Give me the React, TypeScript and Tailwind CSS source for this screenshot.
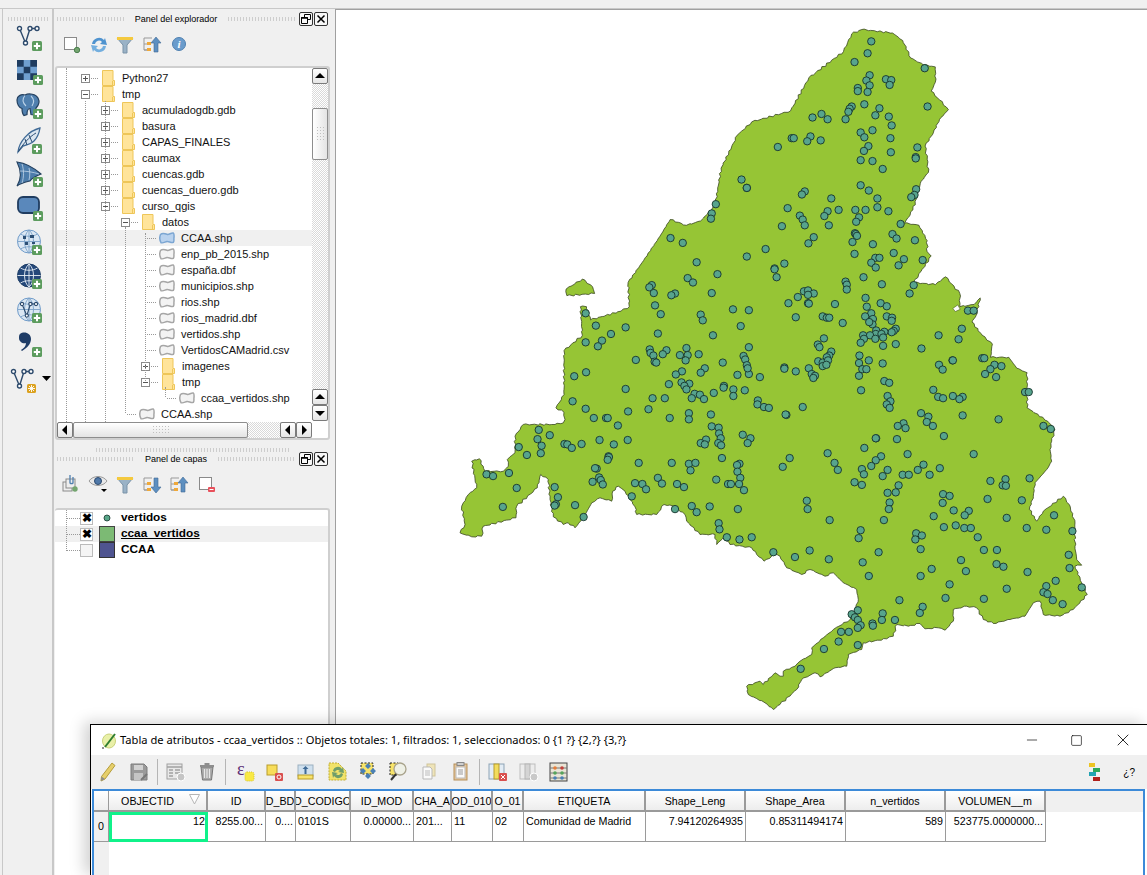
import React from 'react';
import { Minus, Square, X } from 'lucide-react';

const UI_FONT = "font-['Liberation_Sans','Noto_Sans',sans-serif]";

// contorno de la Comunidad de Madrid: mitad norte en coordenadas de trabajo, mitad sur en pixeles de pantalla
const OUTLINE_NORTH =
  '255,870 235,860 255,830 255,730 300,695 295,630 310,630 320,660 395,640 415,630 412,575 450,525 490,470 515,432 555,445 590,435 625,400 640,315 680,240 715,210 810,185 855,110 940,50 960,10 985,0 1060,8 1085,25 1105,65 1135,80 1165,85 1165,120 1155,140 1175,160 1197,182 1175,205 1160,235 1140,265 1145,295 1148,325 1130,345 1125,365 1110,410 1090,440 1125,445 1145,480 1145,505 1155,515 1130,550 1112,575 1165,580 1190,562 1225,600 1225,630 1260,625 1275,610 1265,650 1255,665 1280,695 1305,715 1300,745 1345,745 1365,770 1390,780 1390,860 1440,890';
const OUTLINE_SOUTH =
  '1055,430 1051.7,441.7 1050,450 1051.7,461.7 1046.7,470 1035,483.3 1033.3,496.7 1029.3,510 1036.7,521.7 1043.3,511.7 1063.3,496.7 1069.3,505 1075,523.3 1075,546.7 1076.7,560 1081.7,565.7 1075,566.7 1081.7,583.3 1087.3,595 1073.3,610 1060,616.7 1043.3,615 1040,601.7 1033.3,603.3 1025,616.7 1010,620 993.3,624 983.3,620 976.7,608.3 966.7,606.7 953.3,610 953.3,621.7 945,630.7 938.3,628.3 925,629.3 920,624 908.3,626.7 896.7,625 893.3,636.7 886.7,639.3 863.3,643.3 861.7,650 848.3,655 846.7,666.7 835,668.3 820,677.3 815,673.3 801.7,680 796.7,690 780,705 773.3,710 765,703.3 748.3,695 746.7,686.7 760,681.7 763.3,685 775,673.3 780,676.7 783.3,676.7 783.3,671.7 795,666.7 800,661.7 811.7,655 811.7,648.3 823.3,638.3 833.3,630 850,620 855,610 858.3,600 856.7,590 843.3,583.3 833.3,573.3 825,576.7 810,570 801.7,575 786.7,568.3 780,556.7 775,555 764,561.7 756.7,555 751.7,548.3 730,545 723.3,538.3 716.7,545 715,535 700,535 686.7,521.7 685,515 673.3,506.7 664,505 656.7,515 636.7,515 635,507.3 625,491.7 618.3,486.7 612.7,491.7 611.7,501.7 600,498.3 591.7,503.3 583.3,518.3 575,528.3 568.3,523.3 563.3,525 553.3,517.3 550,500 548.3,480 540.7,475 537.3,488.3 516.7,506.7 516,518.3 483.3,526.7 481.7,536.7 471.7,537.3 460,533.3 465,525 461.7,506.7 468.3,495 476.7,488.3 471.7,461.7 479.3,459.3 485,471.7 503.3,471.7 508.3,466.7 507.3,460 515,453.3 515,436.7 523.3,425 555,425 563.3,423.3 565,420';
const ISLAND = '260,590 300,567 325,585 330,600 262,605';
const HOLE = '1208,634 1220,626 1226,636 1214,641';

const POINTS =
  '1008,27 999,54 967,74 1139,88 1004,104 996,116 1044,113 1057,115 1004,127 1053,126 975,133 975,140 999,142 991,170 1146,175 960,175 955,180 952,187 1028,179 1018,195 1051,198 886,192 864,200 901,204 945,204 1058,218 1011,229 982,234 991,245 1055,247 813,247 818,247 859,243 851,254 884,252 779,267 1001,265 990,276 1056,279 1121,268 1117,290 1117,293 982,297 1011,299 1036,317 690,341 703,360 703,360 982,354 1002,366 1118,363 1114,376 1106,381 845,368 838,375 910,384 1023,384 627,397 1023,404 803,406 901,413 928,410 969,410 994,410 1050,413 617,418 615,430 833,423 840,432 893,424 978,427 971,437 845,445 789,447 904,445 1080,442 968,463 970,465 973,469 1060,465 1070,475 867,472 962,483 854,486 516,474 546,485 1115,479 1012,488 749,499 1063,508 967,510 703,516 1018,519 1028,519 1088,522 1134,524 1008,530 1075,536 1019,541 580,529 771,543 771,545 795,532 631,556 558,565 571,575 776,563 989,563 945,573 948,580 948,591 1034,579 1112,581 470,581 464,586 475,599 617,599 527,600 518,604 843,595 853,593 867,600 853,603 828,608 1102,600 994,610 805,622 853,622 855,623 919,624 478,627 997,630 1031,622 1046,629 669,636 708,638 1245,639 1259,639 308,645 492,647 590,648 595,661 823,654 889,652 899,655 905,655 1008,645 993,652 1046,652 1059,655 1012,658 1011,670 1003,665 1058,662 938,667 333,673 406,677 688,674 1068,680 1063,685 1230,680 1058,688 1020,684 1040,687 1019,692 1033,692 485,691 370,692 620,695 988,695 1005,695 990,703 982,712 1018,703 1037,700 1173,695 1222,704 892,702 348,707 308,711 338,720 877,716 881,722 708,722 1037,719 1068,715 1131,725 465,727 555,724 506,729 910,732 905,741 467,735 474,741 497,738 539,740 558,740 585,738 899,745 979,741 695,742 699,750 1002,752 1207,752 1208,752 1280,747 1285,747 431,751 477,755 481,757 553,752 644,757 878,754 889,757 902,752 889,765 898,762 703,763 978,758 1036,759 1174,762 1183,773 1310,762 1327,765 1300,772 795,768 795,771 823,777 855,770 986,772 996,772 309,779 600,770 590,780 544,777 529,784 680,785 708,783 705,770 862,783 870,787 866,792 280,788 978,787 735,790 1287,783 1314,790 543,802 562,805 512,806 550,810 555,818 647,810 646,814 1040,799 1052,803 406,817 670,818 698,820 983,820 1160,819 1385,824 1394,824 622,826 575,828 588,830 598,840 568,838 670,833 1048,833 1172,835 1184,838 1208,833 1232,835 1224,840 472,838 502,838 730,843 729,852 745,858 757,860 1055,845 1046,852 1053,860 840,858 308,862 276,845 462,863 412,868 1232,877 1130,872 1148,880 800,876 798,875 328,883 358,883 362,883 514,883 561,872 561,886 615,875 1320,886 1144,892 1087,895 1073,901 1092,906 1159,901 1430,901 1448,908 387,900 193,910 617,902 634,905 635,918 220,922 693,921 712,929 1186,924 1020,929 1019,929 639,929 190,931 411,933 342,933 603,932 1071,931 256,942 263,943 298,942 377,943 590,940 600,943 633,940 640,945 705,940 200,946 144,949 274,951 991,951 198,963 164,967 901,963 1097,965 1259,965 364,970 365,972 362,978 808,974 1032,970 1019,979 642,974 438,985 519,985 561,987 577,985 685,987 679,990 918,985 1136,989 1008,992 791,994 335,998 331,997 565,1002 985,999 680,1005 1176,997 926,1001 1122,1001 1048,1001 65,1011 81,1015 120,1008 990,1011 1085,1012 1100,1012 1036,1015 1151,1012 341,1018 687,1019 485,1019 628,1023 1300,1026 1337,1022 1396,1020 325,1028 345,1024 350,1034 429,1031 447,1033 495,1032 532,1033 549,1040 657,1033 664,1033 684,1033 967,1029 985,1035 1330,1036 1338,1037 1075,1036 139,1042 232,1040 456,1045 696,1047 1048,1053 1068,1052 1184,1056 1200,1060 240,1063 421,1061 850,1071 1183,1076 1293,1067 1377,1070 1053,1075 235,1079 232,1082 105,1085 282,1081 568,1083 612,1084 527,1090 681,1090 852,1090 1051,1090 1210,1093 1247,1094 580,1097 1237,1104 1456,1104 303,1108 1161,1106 1340,1110 906,1115 1039,1115 634,1122 636,1136 1215,1127 1186,1131 1236,1133 1252,1133 1389,1133 1437,1137 1501,1140 982,1138 1118,1145 1132,1150 1116,1159 977,1156 654,1154 685,1159 715,1154 1269,1154 1129,1181 857,1184 1026,1188 1284,1183 1316,1183 768,1188 821,1199 1492,1194 904,1204 987,1211 1228,1206 1315,1215 1332,1221 1494,1224 1240,1231 1156,1226 1391,1233 1002,1242 1129,1242 1200,1261 1460,1253 1437,1265 1524,1268 1340,1271 1430,1279 1440,1283 1190,1292 1284,1294 1453,1297 1477,1306 1077,1297 975,1320 1134,1312 1127,1326 960,1329 1036,1327 968,1336 1034,1342 1066,1342 975,1342 1011,1350 1012,1355 982,1354 953,1369 975,1360 934,1369 928,1391 975,1399 892,1408 835,1453';

// paso de coordenadas de trabajo a pixeles del lienzo (el lienzo empieza en 336,11)
const mx = (x: number) => 460 + x * 0.408 - 336;
const my = (y: number) => 30 + y * 0.44 - 11;
const parsePairs = (s: string) => s.split(' ').map((p) => p.split(',').map(Number));
const toCanvas = (s: string) => parsePairs(s).map(([x, y]) => [mx(x), my(y)]);
const screenToCanvas = (s: string) => parsePairs(s).map(([x, y]) => [x - 336, y - 11]);

// parte cada tramo y lo desplaza un poco, para que la costa salga irregular como en el shapefile
function roughen(points: number[][]) {
  const out: string[] = [];
  points.forEach(([x, y], i) => {
    const [nx, ny] = points[(i + 1) % points.length];
    const steps = Math.max(1, Math.round(Math.hypot(nx - x, ny - y) / 3));
    for (let s = 0; s < steps; s++) {
      const t = s / steps;
      const w = s === 0 ? 0 : 0.8;
      const dx = Math.sin(i * 12.9 + s * 78.2) * w;
      const dy = Math.cos(i * 37.7 + s * 41.3) * w;
      out.push(`${(x + (nx - x) * t + dx).toFixed(1)},${(y + (ny - y) * t + dy).toFixed(1)}`);
    }
  });
  return out.join(' ');
}

function MapCanvas() {
  const pts = parsePairs(POINTS);
  const region = roughen([...toCanvas(OUTLINE_NORTH), ...screenToCanvas(OUTLINE_SOUTH)]);
  return (
    <svg className="block h-full w-full" viewBox="0 0 811 864">
      <polygon points={region} fill="#96c535" stroke="#39461f" strokeWidth="0.8" />
      <polygon points={roughen(toCanvas(ISLAND))} fill="#96c535" stroke="#39461f" strokeWidth="0.8" />
      <polygon points={toCanvas(HOLE).join(' ')} fill="#fff" stroke="#39461f" strokeWidth="0.5" />
      {pts.map(([x, y], i) => (
        <circle key={i} cx={mx(x)} cy={my(y)} r="3.7" fill="#57a48d" stroke="#16332c" strokeWidth="0.9" />
      ))}
    </svg>
  );
}

function Plus({ x = 15, y = 15 }: { x?: number; y?: number }) {
  return (
    <g transform={`translate(${x} ${y})`}>
      <rect width="10" height="10" rx="1.500" fill="#5c9c5e" />
      <path d="M5 1.800v6.400M1.800 5h6.400" stroke="#fff" strokeWidth="2" />
    </g>
  );
}

function VeeShape() {
  return (
    <g fill="none" stroke="#2d4a6c" strokeWidth="1.400">
      <path d="M2.500 2.500 8.500 17 13 2.500h7" />
      <circle cx="2.500" cy="2.500" r="2" fill="#fff" />
      <circle cx="8.500" cy="17" r="2" fill="#fff" />
      <circle cx="13" cy="2.500" r="2" fill="#fff" />
      <circle cx="20" cy="2.500" r="2" fill="#fff" />
    </g>
  );
}

function Globe({ dark }: { dark?: boolean }) {
  const c = dark ? '#1f3e66' : '#6f9bc9';
  return (
    <g>
      <circle cx="12" cy="11.500" r="11.500" fill={dark ? '#24487a' : '#dbe7f3'} stroke={c} strokeWidth="1" />
      <path d="M0.500 11.500h23M12 0v23M3.500 4c5 3 12 3 17 0M3.500 19c5-3 12-3 17 0M12 0c-6 5-6 18 0 23M12 0c6 5 6 18 0 23" fill="none" stroke={dark ? '#e9eff6' : '#7ba1c8'} strokeWidth="0.900" />
    </g>
  );
}

function SideIcon({ name }: { name: string }) {
  return (
    <svg width="26" height="26" viewBox="0 0 26 26" className="overflow-visible">
      {name === 'vector' && (
        <>
          <VeeShape />
          <Plus />
        </>
      )}
      {name === 'raster' && (
        <>
          <rect width="20" height="20" fill="#6f9fd0" />
          <path d="M0 0h6.700v6.700H0zM13.300 0H20v6.700h-6.700zM6.700 6.700h6.600v6.600H6.700zM0 13.300h6.700V20H0zM13.300 13.300H20V20h-6.700z" fill="#1f3c60" />
          <Plus x={16} y={15} />
        </>
      )}
      {name === 'postgres' && (
        <>
          <path d="M0 6C0 2 4 0 8 1c4-2 11-1 13 3 2 4 0 8-2 10l-1 7-4-.5-1-6c-2 0-3 1-3 6l-3 1c-2-2-2-5-2-7C2 14 0 10 0 6z" fill="#4f7fae" stroke="#24405f" strokeWidth="1.200" />
          <path d="M8 1.500C5 5 6 9 9 12M14 2c3 3 3 7 1 10" fill="none" stroke="#bcd3e8" strokeWidth="1.100" />
          <Plus x={16} y={15} />
        </>
      )}
      {name === 'feather' && (
        <>
          <path d="M1 24C2 14 11 3 23 0c-1 6-3 10-6 13-3 3-7 4-11 5z" fill="#dbe6f0" stroke="#3f6a96" strokeWidth="1.300" />
          <path d="M1 24C6 16 12 9 19 5M8 11l2 6M12 7l3 7" fill="none" stroke="#2c4f75" strokeWidth="1" />
          <Plus x={15} y={16} />
        </>
      )}
      {name === 'sail' && (
        <>
          <path d="M0 0c8 1 16 5 24 12-5 2-9 4-11 7-4 1-9 2-13 5 5-8 4-16 0-24z" fill="#4c7cab" stroke="#24405f" strokeWidth="1.100" />
          <path d="M5 2c2 6 2 13 0 19M12 6c1 4 1 8 0 12M3 9c6 0 13 1 19 3" fill="none" stroke="#c3d6e9" strokeWidth="0.800" />
          <Plus x={16} y={15} />
        </>
      )}
      {name === 'rect' && (
        <>
          <rect x="1" y="1" width="21" height="16" rx="5" fill="#5a88bb" stroke="#1f3c60" strokeWidth="1.800" />
          <Plus x={16} y={15} />
        </>
      )}
      {name === 'wms' && (
        <>
          <Globe />
          <path d="M6 6h3v3H6zM13 5h4v3h-4zM8 12h3v3H8zM15 12h3v2h-3z" fill="#2c4f75" />
          <Plus x={15} y={15} />
        </>
      )}
      {name === 'wcs' && (
        <>
          <Globe dark />
          <Plus x={15} y={15} />
        </>
      )}
      {name === 'wfs' && (
        <>
          <Globe />
          <g transform="translate(3 4) scale(0.800)">
            <VeeShape />
          </g>
          <Plus x={15} y={15} />
        </>
      )}
      {name === 'comma' && (
        <>
          <path d="M3 2c4-3 11-1 11 5 0 5-4 9-9 12l-1-1c3-2 5-4 5-7-3 1-7-1-7-5 0-2 0-3 1-4z" fill="#1f3c66" />
          <Plus x={15} y={15} />
        </>
      )}
      {name === 'mesh' && (
        <>
          <g transform="translate(-6 3)">
            <VeeShape />
          </g>
          <rect x="10" y="18" width="9" height="9" rx="1.500" fill="#dca21f" />
          <path d="M14.500 19v7M11 22.500h7M12 20l5 5M17 20l-5 5" stroke="#fff" strokeWidth="0.900" />
          <path d="M25 10h9l-4.500 5z" fill="#000" />
        </>
      )}
    </svg>
  );
}

const SIDE_ICONS = ['vector', 'raster', 'postgres', 'feather', 'sail', 'rect', 'wms', 'wcs', 'wfs', 'comma', 'mesh'];

function Grip({ className = '' }: { className?: string }) {
  return <div className={`h-1 bg-[radial-gradient(#cdcdcd_1px,transparent_1px)] bg-[length:3px_2px] ${className}`} />;
}

function DockButton({ kind }: { kind: 'float' | 'close' }) {
  return (
    <div className="flex h-[14px] w-[14px] items-center justify-center rounded-[2px] border border-[#333] bg-[#f7f7f7]">
      {kind === 'close' ? (
        <svg width="10" height="10" viewBox="0 0 10 10">
          <path d="M1.500 1.500l7 7M8.500 1.500l-7 7" stroke="#000" strokeWidth="1.500" />
        </svg>
      ) : (
        <svg width="10" height="10" viewBox="0 0 10 10" fill="none" stroke="#000">
          <path d="M3.500 3V.5h6v5H7M.5 3.500h6v6h-6z" />
          <path d="M0 4h7" strokeWidth="1.500" />
        </svg>
      )}
    </div>
  );
}

function PanelTitle({ title, height }: { title: string; height: string }) {
  return (
    <div className={`flex items-center pl-[1px] pr-[2px] ${height}`}>
      <Grip className="flex-1" />
      <span className="px-[10px] text-[9px] leading-none text-black">{title}</span>
      <Grip className="flex-1" />
      <div className="ml-[3px] flex gap-[1px]">
        <DockButton kind="float" />
        <DockButton kind="close" />
      </div>
    </div>
  );
}

function Expander({ open }: { open?: boolean }) {
  return (
    <svg width="9" height="9" viewBox="0 0 9 9" className="shrink-0">
      <rect x="0.500" y="0.500" width="8" height="8" fill="#fff" stroke="#8a8a8a" />
      <path d={open ? 'M2 4.500h5' : 'M2 4.500h5M4.500 2v5'} stroke="#555" />
    </svg>
  );
}

function FolderIcon() {
  return (
    <svg width="13" height="16" viewBox="0 0 13 16" className="shrink-0">
      <path d="M.5.5h10.500v10h1.500v5H.5z" fill="#ffe49a" stroke="#eec659" />
      <path d="M10.500 11v4" stroke="#eec659" />
    </svg>
  );
}

function ShapeIcon({ active }: { active?: boolean }) {
  return (
    <svg width="16" height="12" viewBox="0 0 16 12" className="shrink-0">
      <path
        d="M1.500 2.500C3.500.5 6 1.500 8 2.300c2 .8 4-1.800 6.300-1.300 1.200 1 .8 3.500.6 5.500 0 1.500.3 3-.6 3.900-2.300.8-4.300-1.200-6.300-.9-2 .4-4 2-6 1.200C.7 8.500.5 5 1.500 2.500z"
        fill={active ? '#b9d2ee' : '#f3f3f3'}
        stroke={active ? '#7ca6d2' : '#a6a6a6'}
        strokeWidth="1.500"
      />
    </svg>
  );
}

type TreeNode = { label: string; level: number; kind: 'dir' | 'file'; open?: boolean; active?: boolean };

const TREE: TreeNode[] = [
  { label: 'Python27', level: 0, kind: 'dir' },
  { label: 'tmp', level: 0, kind: 'dir', open: true },
  { label: 'acumuladogdb.gdb', level: 1, kind: 'dir' },
  { label: 'basura', level: 1, kind: 'dir' },
  { label: 'CAPAS_FINALES', level: 1, kind: 'dir' },
  { label: 'caumax', level: 1, kind: 'dir' },
  { label: 'cuencas.gdb', level: 1, kind: 'dir' },
  { label: 'cuencas_duero.gdb', level: 1, kind: 'dir' },
  { label: 'curso_qgis', level: 1, kind: 'dir', open: true },
  { label: 'datos', level: 2, kind: 'dir', open: true },
  { label: 'CCAA.shp', level: 3, kind: 'file', active: true },
  { label: 'enp_pb_2015.shp', level: 3, kind: 'file' },
  { label: 'españa.dbf', level: 3, kind: 'file' },
  { label: 'municipios.shp', level: 3, kind: 'file' },
  { label: 'rios.shp', level: 3, kind: 'file' },
  { label: 'rios_madrid.dbf', level: 3, kind: 'file' },
  { label: 'vertidos.shp', level: 3, kind: 'file' },
  { label: 'VertidosCAMadrid.csv', level: 3, kind: 'file' },
  { label: 'imagenes', level: 3, kind: 'dir' },
  { label: 'tmp', level: 3, kind: 'dir', open: true },
  { label: 'ccaa_vertidos.shp', level: 4, kind: 'file' },
  { label: 'CCAA.shp', level: 2, kind: 'file' },
  { label: '', level: 2, kind: 'file' },
];

function TreeRow({ node }: { node: TreeNode }) {
  // cada nivel sangra 20px; los archivos no llevan expansor
  const dirPad = 24 + node.level * 20;
  const filePad = 42 + node.level * 20;
  return (
    <div
      className={`relative flex h-4 items-center ${node.active ? 'bg-[#f0f0f0]' : ''}`}
      style={{ paddingLeft: node.kind === 'dir' ? dirPad : filePad }}
    >
      {node.kind === 'dir' ? (
        <>
          <Expander open={node.open} />
          <span className="ml-[1px] w-[7px] shrink-0 border-t border-dotted border-[#999]" />
          <span className="ml-[4px]" />
          <FolderIcon />
          <span className="ml-[7px] text-[11px] whitespace-nowrap text-[#111]">{node.label}</span>
        </>
      ) : (
        <>
          <span className="absolute top-2 w-[9px] border-t border-dotted border-[#999]" style={{ left: filePad - 12 }} />
          <ShapeIcon active={node.active} />
          <span className="ml-[6px] text-[11px] whitespace-nowrap text-[#111]">{node.label}</span>
        </>
      )}
    </div>
  );
}

function ScrollBtn({ dir }: { dir: 'up' | 'down' | 'left' | 'right' }) {
  const d = { up: 'M5 2l5 5H0z', down: 'M5 8 0 3h10z', left: 'M2 5l5-5v10z', right: 'M8 5 3 0v10z' }[dir];
  return (
    <div className="flex h-4 w-4 shrink-0 items-center justify-center rounded-[2px] border border-[#7a7a7a] bg-gradient-to-b from-white to-[#e6e6e6]">
      <svg width="10" height="10" viewBox="0 0 10 10">
        <path d={d} fill="#000" />
      </svg>
    </div>
  );
}

const TRACK = 'bg-[repeating-conic-gradient(#d9d9d9_0_25%,#fff_0_50%)] bg-[length:2px_2px]';

function ExplorerTree() {
  return (
    <div className="relative h-[374px] overflow-hidden rounded-[3px] border-2 border-[#cfcfcf] bg-white pt-[2px]">
      {TREE.map((n, i) => (
        <TreeRow key={i} node={n} />
      ))}
      {/* guias punteadas del arbol */}
      <div className="absolute top-0 bottom-0 left-[9px] border-l border-dotted border-[#999]" />
      <div className="absolute top-[33px] bottom-0 left-[28px] border-l border-dotted border-[#999]" />
      <div className="absolute top-[33px] bottom-0 left-[48px] border-l border-dotted border-[#999]" />
      <div className="absolute top-[159px] bottom-[25px] left-[68px] border-l border-dotted border-[#999]" />
      <div className="absolute top-[165px] bottom-[57px] left-[88px] border-l border-dotted border-[#999]" />
      <div className="absolute top-[319px] h-[10px] left-[108px] border-l border-dotted border-[#999]" />

      <div className={`absolute top-0 right-0 bottom-[17px] flex w-4 flex-col ${TRACK}`}>
        <ScrollBtn dir="up" />
        <div className="mt-[24px] h-[52px] rounded-[2px] border border-[#8d8d8d] bg-gradient-to-r from-white to-[#e4e4e4]">
          <div className="mx-auto mt-[17px] h-[16px] w-[8px] bg-[radial-gradient(#c0c0c0_1px,transparent_1px)] bg-[length:3px_3px]" />
        </div>
        <div className="mt-auto">
          <ScrollBtn dir="up" />
          <ScrollBtn dir="down" />
        </div>
      </div>
      <div className={`absolute right-[16px] bottom-0 left-0 flex h-4 ${TRACK}`}>
        <ScrollBtn dir="left" />
        <div className="h-4 w-[175px] rounded-[2px] border border-[#8d8d8d] bg-gradient-to-b from-white to-[#e4e4e4]">
          <div className="mx-auto mt-[2px] h-[10px] w-[18px] bg-[radial-gradient(#c0c0c0_1px,transparent_1px)] bg-[length:3px_3px]" />
        </div>
        <div className="ml-auto flex">
          <ScrollBtn dir="left" />
          <ScrollBtn dir="right" />
        </div>
      </div>
    </div>
  );
}

function ToolIcon({ name }: { name: string }) {
  return (
    <svg width="20" height="20" viewBox="0 0 20 20" className="overflow-visible">
      {name === 'add' && (
        <>
          <rect x="2.500" y="2.500" width="12" height="12" fill="#fff" stroke="#8a8a8a" />
          <circle cx="15" cy="15" r="2.700" fill="#74a56f" stroke="#4d8050" />
        </>
      )}
      {name === 'refresh' && (
        <>
          <path d="M3 9a7 7 0 0 1 12-4l1-2 2 7-7-1 2-2a4 4 0 0 0-7 2z" fill="#4f93cf" />
          <path d="M17 11A7 7 0 0 1 5 15l-1 2-2-7 7 1-2 2a4 4 0 0 0 7-2z" fill="#73aede" />
        </>
      )}
      {name === 'filter' && (
        <>
          <path d="M1 3h16l-6 7v8H7v-8z" fill="#9ab2c6" stroke="#7a93a8" />
          <rect x="1" y="2" width="16" height="3" fill="#f4c93f" />
        </>
      )}
      {name === 'up' && (
        <>
          <path d="M1 3h8M1 3v12h6M1 9h5M1 15h5" fill="none" stroke="#999" />
          <rect x="4" y="7" width="4" height="3" fill="#f0a93a" />
          <rect x="4" y="13" width="4" height="3" fill="#f0a93a" />
          <path d="M13 2l5 6h-3v9h-4V8H8z" fill="#5d8fc0" stroke="#3f6a96" strokeWidth="0.600" />
        </>
      )}
      {name === 'down' && (
        <>
          <path d="M1 3h8M1 3v12h6M1 9h5M1 15h5" fill="none" stroke="#999" />
          <rect x="4" y="7" width="4" height="3" fill="#f0a93a" />
          <rect x="4" y="13" width="4" height="3" fill="#f0a93a" />
          <path d="M13 18l5-6h-3V3h-4v9H8z" fill="#5d8fc0" stroke="#3f6a96" strokeWidth="0.600" />
        </>
      )}
      {name === 'info' && (
        <>
          <circle cx="9" cy="9" r="6.500" fill="#6a9ccc" stroke="#4f80b0" />
          <text x="9" y="13" textAnchor="middle" fontSize="11" fontWeight="700" fontStyle="italic" fontFamily="Liberation Serif" fill="#fff">
            i
          </text>
        </>
      )}
      {name === 'group' && (
        <>
          <rect x="1" y="7" width="9" height="9" fill="#eee" stroke="#8a8a8a" />
          <rect x="4" y="4" width="9" height="9" fill="#eee" stroke="#8a8a8a" />
          <path d="M8 0v8a2 2 0 0 0 3 0V2" fill="none" stroke="#4f7fae" strokeWidth="1.300" />
          <circle cx="13" cy="14" r="2.700" fill="#74a56f" />
        </>
      )}
      {name === 'eye' && (
        <>
          <path d="M0 6c4-6 14-6 18 0-4 6-14 6-18 0z" fill="#e8e8e8" stroke="#9b9b9b" />
          <circle cx="9" cy="6" r="3.500" fill="#4f78a8" stroke="#2d4a6e" />
          <path d="M12 14h6l-3 3z" fill="#000" />
        </>
      )}
      {name === 'remove' && (
        <>
          <rect x="2.500" y="2.500" width="12" height="12" fill="#fff" stroke="#8a8a8a" />
          <rect x="11" y="12" width="7" height="5" rx="1" fill="#e8505b" />
          <path d="M12.500 14.500h4" stroke="#fff" />
        </>
      )}
    </svg>
  );
}

function TableIcon({ name }: { name: string }) {
  return (
    <svg width="20" height="20" viewBox="0 0 20 20" className="overflow-visible">
      {name === 'pencil' && (
        <>
          <path d="M14 1l3 2.500L7 17l-4 2 .5-4.500z" fill="#e6cf6b" stroke="#b59d3c" />
          <path d="M3 19l.5-4.500L7 17z" fill="#8d8d8d" />
        </>
      )}
      {name === 'save' && (
        <>
          <path d="M2 2h13l3 3v13H2z" fill="#9a9a9a" stroke="#7d7d7d" />
          <rect x="5" y="3" width="9" height="5" fill="#d2d2d2" />
          <rect x="5" y="11" width="9" height="7" fill="#c5c5c5" />
          <path d="M12 18l6-6" stroke="#777" strokeWidth="2" />
        </>
      )}
      {name === 'newrow' && (
        <>
          <rect x="1" y="2" width="15" height="15" fill="#e8e8e8" stroke="#a0a0a0" />
          <path d="M1 5h15M3 8h4M9 8h5M3 11h4M9 11h5M3 14h4" stroke="#a0a0a0" strokeWidth="1.300" />
          <circle cx="15" cy="15" r="4" fill="#c5c5c5" stroke="#fff" />
        </>
      )}
      {name === 'trash' && (
        <>
          <path d="M4 5h12l-1.500 13h-9z" fill="#a9a9a9" stroke="#777" />
          <path d="M3 3h14v2H3zM7.500 1h5v2h-5z" fill="#8e8e8e" />
          <path d="M7.500 7v9M10 7v9M12.500 7v9" stroke="#e8e8e8" strokeWidth="1.200" />
        </>
      )}
      {name === 'expr' && (
        <>
          <text x="1" y="13" fontSize="18" fontFamily="Liberation Serif" fill="#5a2d75">
            ε
          </text>
          <rect x="9" y="10" width="9" height="9" rx="2" fill="#f9e945" stroke="#d8c52e" strokeDasharray="1 1" />
        </>
      )}
      {name === 'deselect' && (
        <>
          <rect x="1" y="3" width="10" height="10" fill="#f7dd5a" stroke="#b89b2b" />
          <rect x="9" y="11" width="8" height="8" rx="1" fill="#d9504f" />
          <circle cx="13" cy="15" r="2" fill="none" stroke="#fff" />
        </>
      )}
      {name === 'invert' && (
        <>
          <rect x="1" y="3" width="15" height="11" fill="#cfe0ee" stroke="#9bb0c0" />
          <rect x="1" y="13" width="15" height="4" fill="#f7e36a" stroke="#b89b2b" />
          <path d="M8.500 4l3 3h-2v5h-2V7h-2z" fill="#3f6a96" />
        </>
      )}
      {name === 'cycle' && (
        <>
          <path d="M1 1h9l8 8v9H1z" fill="#f1e36a" stroke="#c2ad32" strokeDasharray="2 1" />
          <path d="M5 9a5 5 0 0 1 9-2l1-2 1 6-6-1 2-1a3 3 0 0 0-5 1zM15 12a5 5 0 0 1-9 2l-1 2-1-6 6 1-2 1a3 3 0 0 0 5-1z" fill="#6f9e6a" />
        </>
      )}
      {name === 'move' && (
        <>
          <rect x="2" y="1" width="12" height="11" fill="#f7e36a" stroke="#222" strokeDasharray="2 1.500" />
          <path d="M9 1l3 3-3 3-3-3zM4 6l3 3-3 3-3-3zM14 6l3 3-3 3-3-3zM9 11l3 3-3 3-3-3z" fill="#4a80b5" />
        </>
      )}
      {name === 'zoom' && (
        <>
          <rect x="1" y="1" width="8" height="12" fill="#f7e36a" stroke="#222" strokeDasharray="2 1.500" />
          <circle cx="11" cy="7" r="6" fill="#eef0e6" stroke="#a9a38c" strokeWidth="1.300" />
          <path d="M7 12l-5 6" stroke="#333" strokeWidth="2" />
        </>
      )}
      {name === 'copy' && (
        <>
          <rect x="7" y="2" width="8" height="12" fill="#efe4b8" stroke="#cfc49a" />
          <path d="M3 5h7l2 2v10H3z" fill="#fafafa" stroke="#b9b9b9" />
          <path d="M5 9h5M5 11h5M5 13h5" stroke="#bbb" />
        </>
      )}
      {name === 'paste' && (
        <>
          <rect x="3" y="2" width="13" height="16" fill="#e7c79a" stroke="#b58f5b" />
          <rect x="5" y="5" width="9" height="11" fill="#fafafa" stroke="#bbb" />
          <rect x="6" y="0.500" width="7" height="3" fill="#cfcfcf" stroke="#888" />
          <path d="M7 8h5M7 10h5M7 12h5" stroke="#999" />
        </>
      )}
      {name === 'delcol' && (
        <>
          <rect x="1" y="2" width="15" height="15" fill="#e3ecf4" stroke="#8da3b5" />
          <rect x="6" y="2" width="5" height="15" fill="#f2dc5d" stroke="#b89b2b" />
          <rect x="11" y="11" width="8" height="8" rx="1" fill="#d9504f" />
          <path d="M13 13l4 4M17 13l-4 4" stroke="#fff" />
        </>
      )}
      {name === 'addcol' && (
        <>
          <rect x="1" y="2" width="15" height="15" fill="#ececec" stroke="#bdbdbd" />
          <rect x="6" y="2" width="5" height="15" fill="#d4d4d4" stroke="#b5b5b5" />
          <circle cx="15" cy="15" r="4" fill="#c9c9c9" stroke="#fff" />
        </>
      )}
      {name === 'calc' && (
        <>
          <rect x="1" y="1" width="17" height="18" fill="#e9e5d6" stroke="#444" />
          <path d="M1 6h17M1 11h17M1 16h17" stroke="#777" />
          <circle cx="6" cy="6" r="1.800" fill="#e57e3a" />
          <circle cx="13" cy="6" r="1.800" fill="#c2423a" />
          <circle cx="6" cy="11" r="1.800" fill="#55a45a" />
          <circle cx="13" cy="11" r="1.800" fill="#55a45a" />
          <circle cx="6" cy="16" r="1.800" fill="#4a80b5" />
          <circle cx="13" cy="16" r="1.800" fill="#4a80b5" />
        </>
      )}
      {name === 'dock' && (
        <>
          <rect x="3" y="1" width="6" height="4" fill="#ecc423" />
          <rect x="7" y="6" width="7" height="4" fill="#2ea85a" />
          <rect x="3" y="10" width="7" height="4" fill="#23a3b3" />
          <rect x="7" y="15" width="7" height="4" fill="#b0201c" />
        </>
      )}
    </svg>
  );
}

const COLUMNS: { title: string; value: string; align: string }[] = [
  { title: 'OBJECTID', value: '12', align: 'text-right' },
  { title: 'ID', value: '8255.00...', align: 'text-right' },
  { title: 'D_BD', value: '0....', align: 'text-right' },
  { title: 'D_CODIGO', value: '0101S', align: 'text-left' },
  { title: 'ID_MOD', value: '0.00000...', align: 'text-right' },
  { title: 'CHA_A', value: '201...', align: 'text-left' },
  { title: 'OD_010', value: '11', align: 'text-left' },
  { title: 'O_01', value: '02', align: 'text-left' },
  { title: 'ETIQUETA', value: 'Comunidad de Madrid', align: 'text-left' },
  { title: 'Shape_Leng', value: '7.94120264935', align: 'text-right' },
  { title: 'Shape_Area', value: '0.85311494174', align: 'text-right' },
  { title: 'n_vertidos', value: '589', align: 'text-right' },
  { title: 'VOLUMEN__m', value: '523775.0000000...', align: 'text-right' },
];

function AttributeTable() {
  return (
    <div className={`absolute top-[724px] left-[90px] flex h-[152px] w-[1058px] flex-col border-t border-l border-black bg-white shadow-[-6px_-2px_14px_rgba(0,0,0,0.18)] ${UI_FONT}`}>
      <div className="flex h-[30px] shrink-0 items-center pl-[10px]">
        <svg width="17" height="17" viewBox="0 0 17 17">
          <ellipse cx="8" cy="9" rx="6.500" ry="7" fill="#e9f0a8" stroke="#c9d27a" />
          <path d="M4 15 14 2" stroke="#2f7d2f" strokeWidth="2" />
          <path d="M1 16h2" stroke="#222" />
        </svg>
        <span className="ml-[2px] font-['Noto_Sans'] text-[11.150px] whitespace-nowrap text-black">
          Tabla de atributos - ccaa_vertidos :: Objetos totales: 1, filtrados: 1, seleccionados: 0 {'{1 ?} {2,?} {3,?}'}
        </span>
        <div className="ml-auto flex items-center gap-[30px] pr-[15px] text-black">
          <Minus size={16} strokeWidth={1} />
          <Square size={13} strokeWidth={1.200} />
          <X size={20} strokeWidth={1} />
        </div>
      </div>

      <div className="flex h-[34px] shrink-0 items-center bg-[#f0f0f0] pl-[7px]">
        <div className="flex w-[31px]"><TableIcon name="pencil" /></div>
        <div className="flex w-[28px]"><TableIcon name="save" /></div>
        <div className="mr-[8px] h-[26px] w-[1px] bg-[#b5b5b5]" />
        <div className="flex w-[31px]"><TableIcon name="newrow" /></div>
        <div className="flex w-[27.500px]"><TableIcon name="trash" /></div>
        <div className="mr-[10px] h-[26px] w-[1px] bg-[#b5b5b5]" />
        {['expr', 'deselect', 'invert', 'cycle', 'move', 'zoom', 'copy'].map((n) => (
          <div key={n} className="flex w-[30.800px]">
            <TableIcon name={n} />
          </div>
        ))}
        <div className="flex w-[28px]"><TableIcon name="paste" /></div>
        <div className="mr-[8px] h-[26px] w-[1px] bg-[#b5b5b5]" />
        {['delcol', 'addcol', 'calc'].map((n) => (
          <div key={n} className="flex w-[30.500px]">
            <TableIcon name={n} />
          </div>
        ))}
        <div className="ml-auto flex items-center gap-[17px] pr-[13px]">
          <TableIcon name="dock" />
          <span className="text-[10px] text-black">¿?</span>
        </div>
      </div>

      {/* rejilla de la tabla */}
      <div className="mr-[3px] ml-[1px] flex-1 overflow-hidden border-t-2 border-r-2 border-l-2 border-[#3c8ad8] bg-white">
        <div className="flex h-full flex-col">
          <div className="grid grid-cols-[15px_99px_58px_30px_55px_63px_38px_41px_31px_122px_100px_100px_100px_100px] bg-[#f0f0f0] text-[10.700px] text-black">
            <div className="h-[21px] border-r border-b-2 border-[#9a9a9a] bg-gradient-to-b from-white to-[#ededed]" />
            {COLUMNS.map((c, i) => (
              <div key={c.title} className={`relative flex h-[21px] items-center justify-center overflow-hidden border-r-2 border-b-2 border-[#9a9a9a] bg-gradient-to-b from-white to-[#ededed] pt-[1px] whitespace-nowrap ${i === 0 ? 'pr-[20px]' : ''}`}>
                {c.title}
                {i === 0 && (
                  <svg width="11" height="11" viewBox="0 0 11 11" className="absolute top-[3px] right-[6px]">
                    <path d="M.5.500h10L5.500 10z" fill="#fff" stroke="#b5b5b5" />
                  </svg>
                )}
              </div>
            ))}
          </div>
          <div className="grid grid-cols-[15px_99px_58px_30px_55px_63px_38px_41px_31px_122px_100px_100px_100px_100px] text-[10.700px] text-black">
            <div className="flex h-[30px] items-center justify-center border-r border-b border-[#9a9a9a] bg-[#f0f0f0]">0</div>
            {COLUMNS.map((c, i) => (
              <div
                key={c.title}
                className={`h-[30px] overflow-hidden whitespace-nowrap ${c.align} ${
                  i === 0 ? 'border-[3px] border-[#10f28a] pt-0 pr-0 leading-[13px]' : 'border-r border-b border-[#9a9a9a] px-[2px] pt-[1px]'
                }`}
              >
                {c.value}
              </div>
            ))}
          </div>
          <div className="w-[15px] flex-1 bg-[#f0f0f0]" />
        </div>
      </div>
    </div>
  );
}

export default function App() {
  return (
    <div className={`relative flex h-[875px] w-[1147px] flex-col overflow-hidden bg-[#f0f0f0] ${UI_FONT}`}>
      <div className="h-[9px] shrink-0 border-b border-[#c8c8c8]" />
      <div className="flex min-h-0 flex-1">
        {/* barra de capas a la izquierda */}
        <div className="ml-[2px] flex w-[52px] shrink-0 flex-col border-r-2 border-l-[1px] border-[#c8c8c8] pt-[8px]">
          <Grip className="mx-[4px]" />
          <div className="mt-[1px] flex flex-col pl-[14px]">
            {SIDE_ICONS.map((n) => (
              <div key={n} className="flex h-[34px] items-center">
                <SideIcon name={n} />
              </div>
            ))}
          </div>
        </div>

        {/* paneles acoplados */}
        <div className="flex w-[276px] shrink-0 flex-col pl-[1px]">
          <PanelTitle title="Panel del explorador" height="h-5" />
          <div className="flex h-[37px] items-center gap-[7px] pb-[5px] pl-[7px]">
            <ToolIcon name="add" />
            <ToolIcon name="refresh" />
            <ToolIcon name="filter" />
            <ToolIcon name="up" />
            <ToolIcon name="info" />
          </div>
          <ExplorerTree />
          <Grip className="mx-[40px] mt-[8px]" />
          <PanelTitle title="Panel de capas" height="h-[14px]" />
          <div className="flex h-[42px] items-center gap-[7px] pb-[4px] pl-[7px]">
            {['group', 'eye', 'filter', 'down', 'up', 'remove'].map((n) => (
              <ToolIcon key={n} name={n} />
            ))}
          </div>
          <div className="relative flex-1 rounded-t-[3px] border-t-2 border-r-2 border-[#cfcfcf] bg-white text-[11.800px] font-bold text-black">
            <div className="absolute top-0 left-[11px] h-[41px] border-l border-dotted border-[#999]" />
            <div className="flex h-4 items-center pl-[11px]">
              <span className="w-[14px] border-t border-dotted border-[#999]" />
              <span className="flex h-[13px] w-[13px] items-center justify-center border border-[#bbb] bg-white text-[12px] leading-none">✖</span>
              <svg width="14" height="14" viewBox="0 0 14 14" className="ml-[7px]">
                <circle cx="7" cy="7" r="3" fill="#58a689" stroke="#17352c" strokeWidth="0.800" />
              </svg>
              <span className="ml-[7px]">vertidos</span>
            </div>
            <div className="flex h-4 items-center bg-[#f0f0f0] pl-[11px]">
              <span className="w-[14px] border-t border-dotted border-[#999]" />
              <span className="flex h-[13px] w-[13px] items-center justify-center border border-[#bbb] bg-white text-[12px] leading-none">✖</span>
              <span className="ml-[6px] h-[16px] w-[16px] border border-[#444] bg-[#7cba74]" />
              <span className="ml-[6px] underline">ccaa_vertidos</span>
            </div>
            <div className="flex h-4 items-center pl-[11px]">
              <span className="w-[14px] border-t border-dotted border-[#999]" />
              <span className="h-[13px] w-[13px] border border-[#bbb] bg-[#f5f5f5]" />
              <span className="ml-[6px] h-[16px] w-[16px] border border-[#333] bg-[#4f5490]" />
              <span className="ml-[6px]">CCAA</span>
            </div>
          </div>
        </div>

        {/* lienzo del mapa */}
        <div className="ml-[5px] h-full flex-1 overflow-hidden border-t border-l border-[#a0a0a0] bg-white">
          <MapCanvas />
        </div>
      </div>
      <AttributeTable />
    </div>
  );
}
